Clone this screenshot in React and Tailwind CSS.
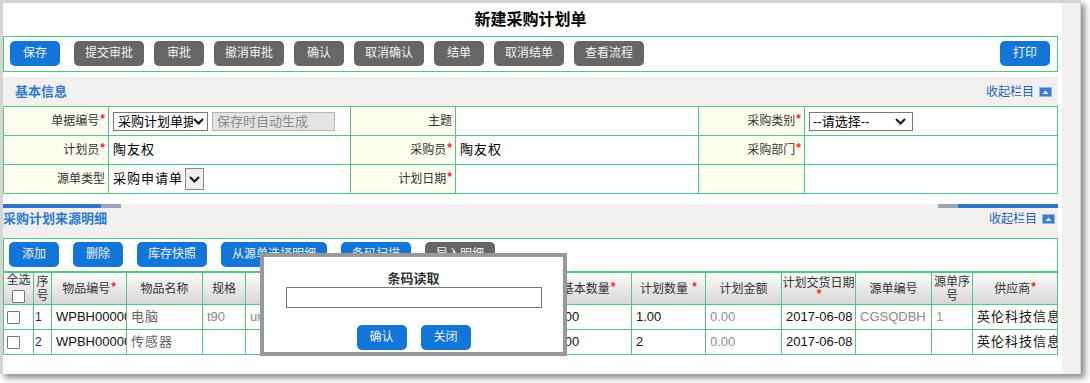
import React from 'react';

const font = { fontFamily: '"Liberation Sans", "Noto Sans CJK SC", sans-serif' };

const Star = () => <span className="text-[#ff1a1a] font-bold text-[12px] relative -top-[2px] ml-px">*</span>;

const Chevron = () => (
  <svg width="11" height="7" viewBox="0 0 11 7" className="shrink-0">
    <path d="M1 1 L5.5 5.5 L10 1" fill="none" stroke="#111" strokeWidth="2" />
  </svg>
);

const CollapseIcon = () => (
  <svg width="13" height="10" viewBox="0 0 13 10" className="ml-[5px]">
    <rect x="0.5" y="0.5" width="12" height="9" fill="#3a7bd0" stroke="#8fb3e3" />
    <path d="M3.5 7 L6.5 3.5 L9.5 7 Z" fill="#fff" />
  </svg>
);

const Box = () => <span className="block w-[13px] h-[13px] border border-[#777] bg-white rounded-[1px]" />;

const Btn = ({ children, w = 'w-[50px]', gray, className = '' }) => (
  <button
    className={`${w} h-[25px] shrink-0 rounded-[5px] text-[12px] text-[#f4f4f4] leading-[25px] ${
      gray ? 'bg-[#666666]' : 'bg-[#1276d9]'
    } ${className}`}
  >
    {children}
  </button>
);

const Label = ({ children, star }) => (
  <td className="bg-[#fefef0] border border-[#4cca80] text-right pr-[3px] text-[12px] text-[#333] h-[29px]">
    {children}
    {star && <Star />}
  </td>
);

const Val = ({ children }) => (
  <td className="border border-[#4cca80] pl-[4px] text-[13px] text-black h-[29px]">{children}</td>
);

const cols = [30, 18, 75, 76, 43, 65, 70, 80, 85, 86, 74, 76, 74, 76, 41, 85];

const Th = ({ children }) => (
  <th className="border border-[#4cca80] font-normal text-[12px] leading-[14px] text-[#333] p-0 text-center overflow-hidden">
    {children}
  </th>
);

const Td = ({ children, className = '' }) => (
  <td className="border border-[#4cca80] p-0 h-[25px] overflow-hidden">
    <div className={`whitespace-nowrap overflow-hidden text-[13px] pl-[4px] ${className}`}>{children}</div>
  </td>
);

const rows = [
  { no: '1', code: 'WPBH00000001', name: '电脑', spec: 't90', color: 'unit', base: '1.00', qty: '1.00', src: 'CGSQDBH', srcNo: '1' },
  { no: '2', code: 'WPBH00000002', name: '传感器', spec: '', color: '', base: '2.00', qty: '2', src: '', srcNo: '' },
];

export default function App() {
  return (
    <div className="w-[1090px] h-[383px] bg-white overflow-hidden" style={font}>
      <div className="w-[1081px] h-[374px] flex border-t-[3px] border-l-[3px] border-r border-[#d6d4d2] shadow-[4px_4px_6px_rgba(0,0,0,0.45)] bg-white">
        <div className="w-[1059px] relative">
          <div className="w-[1055px]">
            {/* title */}
            <div className="h-[33px] flex items-center justify-center text-[16px] font-bold text-black pt-[1px]">
              新建采购计划单
            </div>

            {/* main toolbar */}
            <div className="h-[36px] border border-[#4cca80] flex items-start pt-[4px] pl-[6px] pr-[7px]">
              <Btn>保存</Btn>
              <Btn gray w="w-[70px]" className="ml-[14px]">提交审批</Btn>
              <Btn gray className="ml-[10px]">审批</Btn>
              <Btn gray w="w-[70px]" className="ml-[10px]">撤消审批</Btn>
              <Btn gray className="ml-[10px]">确认</Btn>
              <Btn gray w="w-[70px]" className="ml-[10px]">取消确认</Btn>
              <Btn gray className="ml-[10px]">结单</Btn>
              <Btn gray w="w-[70px]" className="ml-[10px]">取消结单</Btn>
              <Btn gray w="w-[70px]" className="ml-[10px]">查看流程</Btn>
              <Btn className="ml-auto">打印</Btn>
            </div>

            {/* basic info band */}
            <div className="mt-[5px] h-[29px] bg-[#f2f0ee] flex items-center justify-between pl-[12px] pr-[6px]">
              <span className="text-[13px] font-bold text-[#2b79d2]">基本信息</span>
              <span className="flex items-center text-[12px] text-[#1e60c0]">
                收起栏目
                <CollapseIcon />
              </span>
            </div>

            <table className="w-[1055px] border-collapse table-fixed">
              <colgroup>
                <col className="w-[105px]" />
                <col className="w-[242px]" />
                <col className="w-[105px]" />
                <col className="w-[243px]" />
                <col className="w-[106px]" />
                <col />
              </colgroup>
              <tbody>
                <tr>
                  <Label star>单据编号</Label>
                  <Val>
                    <div className="flex items-center gap-[4px]">
                      <div className="w-[95px] h-[19px] border border-[#777] bg-white flex items-center pl-[4px] pr-[3px]">
                        <span className="flex-1 overflow-hidden whitespace-nowrap text-[13px] leading-[17px]">采购计划单据编号</span>
                        <Chevron />
                      </div>
                      <div className="w-[123px] h-[19px] border border-[#b4b4b4] bg-[#e4e4e4] text-[13px] leading-[17px] text-[#8a8a8a] pl-[4px]">
                        保存时自动生成
                      </div>
                    </div>
                  </Val>
                  <Label>主题</Label>
                  <Val />
                  <Label star>采购类别</Label>
                  <Val>
                    <div className="w-[104px] h-[19px] border border-[#777] bg-white flex items-center pl-[3px] pr-[6px]">
                      <span className="flex-1 whitespace-nowrap text-[13px] leading-[17px]">--请选择--</span>
                      <Chevron />
                    </div>
                  </Val>
                </tr>
                <tr>
                  <Label star>计划员</Label>
                  <Val><span className="tracking-[1px]">陶友权</span></Val>
                  <Label star>采购员</Label>
                  <Val><span className="tracking-[1px]">陶友权</span></Val>
                  <Label star>采购部门</Label>
                  <Val />
                </tr>
                <tr>
                  <Label>源单类型</Label>
                  <Val>
                    <div className="flex items-center">
                      <span className="tracking-[1px]">采购申请单</span>
                      <span className="ml-[2px] w-[19px] h-[22px] border border-[#888] bg-[#eeeeee] flex items-center justify-center">
                        <Chevron />
                      </span>
                    </div>
                  </Val>
                  <Label star>计划日期</Label>
                  <Val />
                  <Label />
                  <Val />
                </tr>
              </tbody>
            </table>

            {/* detail band */}
            <div className="mt-[10px] h-[34px] bg-[#f2f0ee]">
              <div className="flex h-[4px]">
                <div className="w-[98px] bg-[#3273cc]" />
                <div className="w-[20px] bg-[#99a4b8]" />
                <div className="flex-1" />
                <div className="w-[20px] bg-[#99a4b8]" />
                <div className="w-[100px] bg-[#3273cc]" />
              </div>
              <div className="h-[22px] flex items-center justify-between pr-[3px]">
                <span className="text-[13px] font-bold text-[#2b79d2]">采购计划来源明细</span>
                <span className="flex items-center text-[12px] text-[#1e60c0]">
                  收起栏目
                  <CollapseIcon />
                </span>
              </div>
            </div>

            {/* detail toolbar */}
            <div className="h-[34px] border border-[#4cca80] flex items-start pt-[3px] pl-[5px] gap-[14px]">
              <Btn className="h-[24px]">添加</Btn>
              <Btn>删除</Btn>
              <Btn w="w-[70px]">库存快照</Btn>
              <Btn w="w-[106px]">从源单选择明细</Btn>
              <Btn w="w-[70px]">条码扫描</Btn>
              <Btn gray w="w-[70px]">导入明细</Btn>
            </div>

            {/* detail table */}
            <table className="w-[1054px] border-collapse table-fixed">
              <colgroup>
                {cols.map((c, i) => (
                  <col key={i} style={{ width: c }} />
                ))}
              </colgroup>
              <thead>
                <tr className="h-[32px] bg-gradient-to-b from-[#fbfbfb] to-[#d6d6d6]">
                  <Th>
                    <div className="flex flex-col items-center">
                      <span className="leading-[13px]">全选</span>
                      <span className="mt-[3px]"><Box /></span>
                    </div>
                  </Th>
                  <Th>序号</Th>
                  <Th>物品编号<Star /></Th>
                  <Th>物品名称</Th>
                  <Th>规格</Th>
                  <Th>颜色</Th>
                  <Th>单位</Th>
                  <Th>批号</Th>
                  <Th>生产日期</Th>
                  <Th>基本数量<Star /></Th>
                  <Th>计划数量 <Star /></Th>
                  <Th>计划金额</Th>
                  <Th>
                    <div className="whitespace-nowrap">计划交货日期</div>
                    <div className="h-[12px] leading-[12px]"><Star /></div>
                  </Th>
                  <Th>源单编号</Th>
                  <Th>源单序号</Th>
                  <Th>供应商<Star /></Th>
                </tr>
              </thead>
              <tbody>
                {rows.map((r) => (
                  <tr key={r.no}>
                    <td className="border border-[#4cca80] p-0 h-[25px]">
                      <div className="pl-[3px]"><Box /></div>
                    </td>
                    <Td className="!pl-[1px] !text-[12px] text-[#2c2460]">{r.no}</Td>
                    <Td className="text-[#111]">{r.code}</Td>
                    <Td className="text-[#666] tracking-[1px]">{r.name}</Td>
                    <Td className="text-[#888]">{r.spec}</Td>
                    <Td className="text-[#888]">{r.color}</Td>
                    <Td />
                    <Td />
                    <Td />
                    <Td className="!pl-[8px] text-[#111]">{r.base}</Td>
                    <Td className="text-[#111]">{r.qty}</Td>
                    <Td className="text-[#8a8e9c]">0.00</Td>
                    <Td className="text-[#111]">2017-06-08</Td>
                    <Td className="text-[#888]">{r.src}</Td>
                    <Td className="text-[#999]">{r.srcNo}</Td>
                    <Td className="text-[#111] tracking-[1px]">英伦科技信息有限公司</Td>
                  </tr>
                ))}
              </tbody>
            </table>
          </div>

          {/* barcode dialog */}
          <div className="absolute left-[257px] top-[250px] w-[307px] h-[103px] border-4 border-[#999999] bg-white flex flex-col items-center pt-[14px]">
            <div className="h-[16px] leading-[16px] text-[13px] font-bold text-[#333]">条码读取</div>
            <div className="w-[256px] h-[21px] border border-[#777] bg-white" />
            <div className="mt-[17px] flex gap-[14px]">
              <Btn>确认</Btn>
              <Btn>关闭</Btn>
            </div>
          </div>
        </div>
        <div className="flex-1 bg-[#f1f0ef]" />
      </div>
    </div>
  );
}
